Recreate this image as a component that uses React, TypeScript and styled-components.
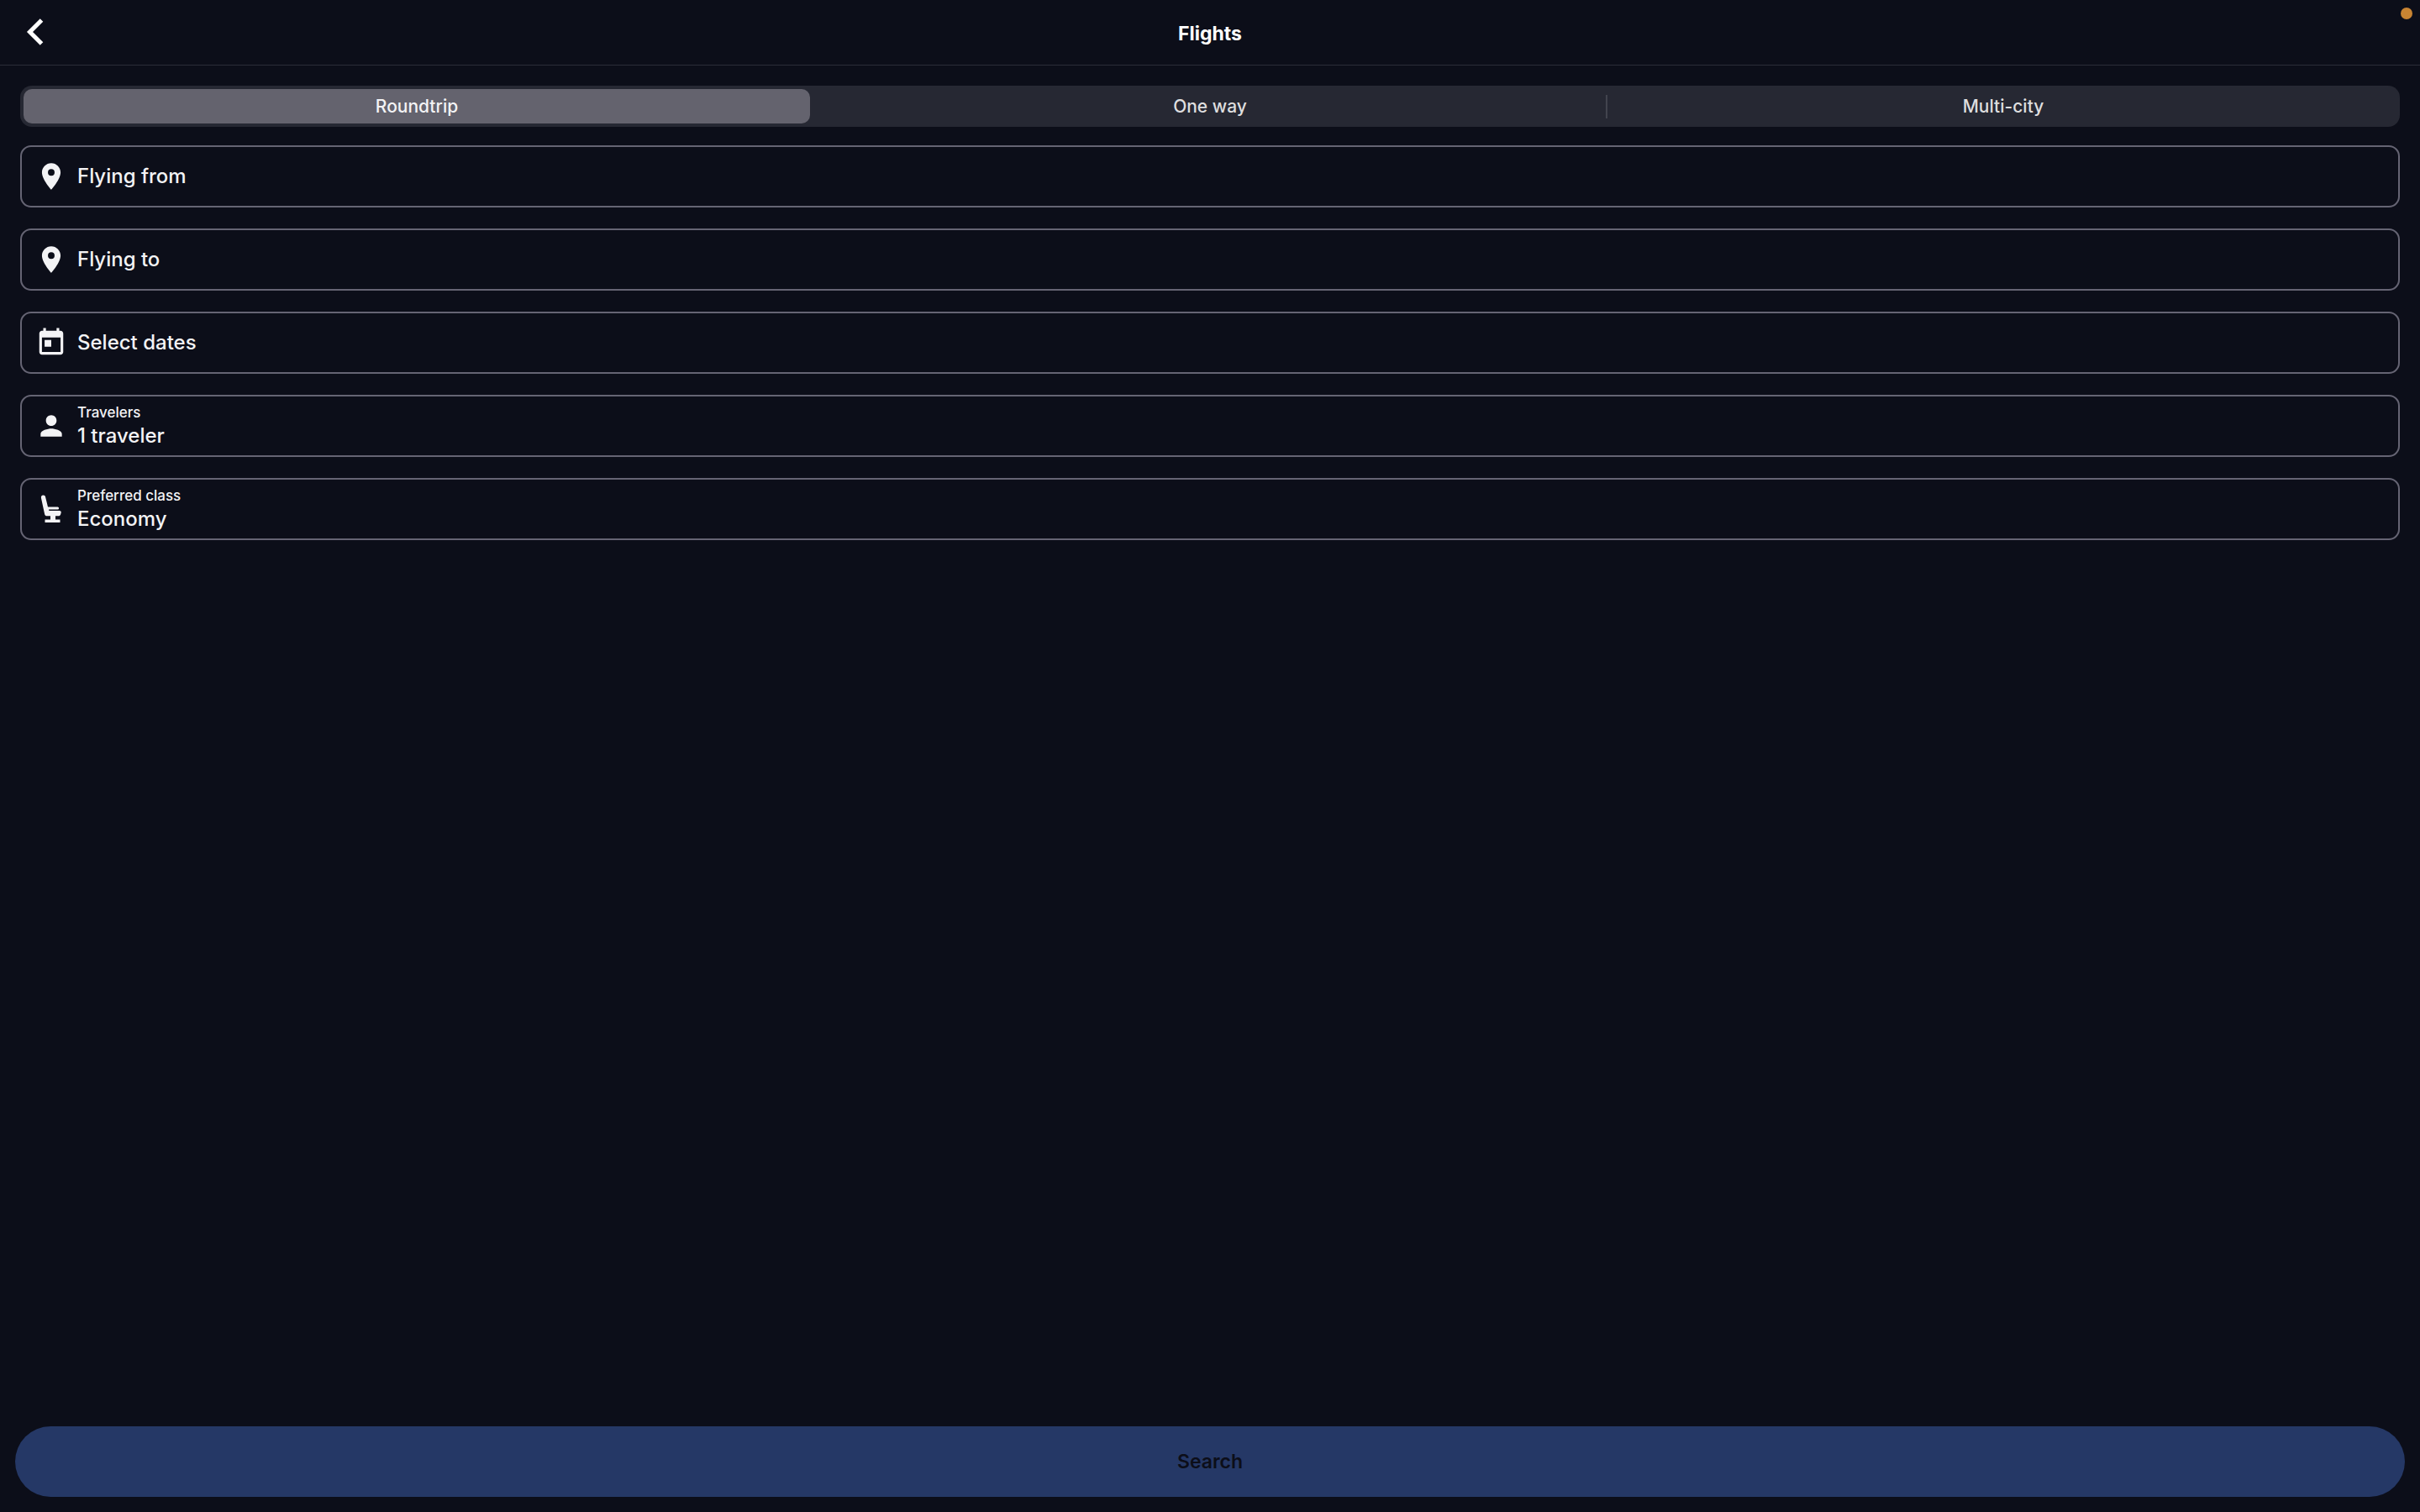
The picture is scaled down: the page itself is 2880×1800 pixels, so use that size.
import React, { useState } from 'react';
import styled, { createGlobalStyle } from 'styled-components';

const color = {
  page: '#0c0e19',
  line: '#2b2d38',
  outline: '#656473',
  track: '#262833',
  thumb: '#64636e',
  separator: '#42444e',
  title: '#ffffff',
  text: '#f3f3f5',
  muted: '#dededf',
  action: '#253866',
  recording: '#c98432',
};

const GlobalStyle = createGlobalStyle`
  *, *::before, *::after {
    box-sizing: border-box;
  }
  body {
    margin: 0;
    background: ${color.page};
    color: ${color.text};
    font-family: Inter, "Liberation Sans", sans-serif;
  }
  button, input {
    font: inherit;
    color: inherit;
  }
`;

const Screen = styled.div`
  position: relative;
  display: flex;
  flex-direction: column;
  min-height: 100vh;
`;

const RecordingDot = styled.span`
  position: absolute;
  top: 9px;
  right: 9px;
  width: 14px;
  height: 14px;
  border-radius: 50%;
  background: ${color.recording};
`;

const Header = styled.header`
  display: grid;
  grid-template-columns: 1fr auto 1fr;
  align-items: center;
  height: 78px;
  padding: 0 24px;
  border-bottom: 1px solid ${color.line};
`;

const BackButton = styled.button`
  justify-self: start;
  display: flex;
  padding: 0 5px;
  border: 0;
  background: none;
  cursor: pointer;
`;

const Title = styled.h1`
  margin: 0;
  padding-top: 2px;
  color: ${color.title};
  font-size: 23px;
  line-height: 32px;
  font-weight: 700;
`;

const Form = styled.form`
  flex: 1;
  display: flex;
  flex-direction: column;
`;

const Body = styled.div`
  flex: 1;
  display: flex;
  flex-direction: column;
  gap: 22px;
  padding: 24px;
`;

const TripTypes = styled.fieldset`
  display: grid;
  grid-template-columns: repeat(3, 1fr);
  margin: 0;
  padding: 0;
  border: 0;
  border-radius: 14px;
  background: ${color.track};
`;

const TripType = styled.label<{ $selected: boolean; $divided: boolean }>`
  display: flex;
  align-items: center;
  padding: 4px;
  cursor: pointer;
  color: ${(p) => (p.$selected ? color.text : color.muted)};

  &::before {
    content: '';
    width: 2px;
    height: 28px;
    margin-left: -5px;
    margin-right: 3px;
    background: ${(p) => (p.$divided ? color.separator : 'transparent')};
  }
`;

const TripRadio = styled.input`
  appearance: none;
  width: 0;
  height: 0;
  margin: 0;
`;

const TripName = styled.span<{ $selected: boolean }>`
  flex: 1;
  border-radius: 10px;
  background: ${(p) => (p.$selected ? color.thumb : 'transparent')};
  text-align: center;
  font-size: 21px;
  line-height: 41px;
  font-weight: 500;
`;

const Fields = styled.div`
  display: flex;
  flex-direction: column;
  gap: 25px;
`;

const Field = styled.button`
  display: flex;
  align-items: center;
  gap: 12px;
  height: 74px;
  padding: 0 16px;
  border: 2px solid ${color.outline};
  border-radius: 13px;
  background: none;
  text-align: left;
  cursor: pointer;
`;

const FieldText = styled.span`
  display: flex;
  flex-direction: column;
`;

const FieldLabel = styled.span`
  font-size: 17px;
  line-height: 24px;
  font-weight: 500;
`;

const FieldValue = styled.span`
  font-size: 24px;
  line-height: 32px;
  font-weight: 500;
`;

const Icon = styled.svg`
  flex: none;
  width: 38px;
  height: 38px;
  fill: ${color.text};
`;

const Footer = styled.footer`
  padding: 18px;
`;

const SearchButton = styled.button`
  display: block;
  width: 100%;
  height: 84px;
  border: 0;
  border-radius: 42px;
  background: ${color.action};
  color: ${color.page};
  font-size: 23px;
  line-height: 32px;
  font-weight: 600;
`;

const ChevronIcon = () => (
  <svg width="24" height="36" viewBox="0 0 24 36" aria-hidden="true">
    <path d="M20.5 3 6.500 17l14 14" fill="none" stroke={color.title} strokeWidth="5" />
  </svg>
);

const PinIcon = () => (
  <Icon viewBox="0 0 24 24" aria-hidden="true">
    <path d="M12 2C8.13 2 5 5.13 5 9c0 5.25 7 13 7 13s7-7.75 7-13c0-3.87-3.13-7-7-7zm0 9.5a2.5 2.5 0 0 1 0-5 2.5 2.5 0 0 1 0 5z" />
  </Icon>
);

const CalendarIcon = () => (
  <Icon viewBox="0 0 24 24" aria-hidden="true">
    <path d="M19 3h-1V1h-2v2H8V1H6v2H5c-1.11 0-1.99.9-1.99 2L3 19c0 1.1.89 2 2 2h14c1.1 0 2-.9 2-2V5c0-1.1-.9-2-2-2zm0 16H5V8h14v11zM7 10h5v5H7z" />
  </Icon>
);

const PersonIcon = () => (
  <Icon viewBox="0 0 24 24" aria-hidden="true">
    <path d="M12 12c2.21 0 4-1.79 4-4s-1.79-4-4-4-4 1.79-4 4 1.79 4 4 4zm0 2c-2.67 0-8 1.34-8 4v2h16v-2c0-2.66-5.33-4-8-4z" />
  </Icon>
);

const SeatIcon = () => (
  <Icon viewBox="0 0 38 38" aria-hidden="true">
    <path d="M9.500 2.500c1.500 0 2.300.9 2.600 2.300L15 16.500h11.600a1.500 1.500 0 0 1 0 3H16l.4 1.500h12.300c1.700 0 2.300 1 2 2.200l-.6 2.200c-.4 1.200-1.300 1.800-2.500 1.800H14c-1.600 0-2.600-.9-2.900-2.300L7 6c-.5-2.100.6-3.500 2.500-3.500z" />
    <path d="M18 26h6v5.500h5.500V35h-18v-3.500H18z" />
  </Icon>
);

const tripTypes = ['Roundtrip', 'One way', 'Multi-city'];

const fields = [
  { value: 'Flying from', icon: PinIcon },
  { value: 'Flying to', icon: PinIcon },
  { value: 'Select dates', icon: CalendarIcon },
  { label: 'Travelers', value: '1 traveler', icon: PersonIcon },
  { label: 'Preferred class', value: 'Economy', icon: SeatIcon },
];

export default function App() {
  const [selected, setSelected] = useState(0);

  return (
    <>
      <GlobalStyle />
      <Screen>
        <RecordingDot />
        <Header>
          <BackButton type="button" aria-label="Back">
            <ChevronIcon />
          </BackButton>
          <Title>Flights</Title>
        </Header>
        <Form onSubmit={(e) => e.preventDefault()}>
          <Body>
            <TripTypes aria-label="Trip type">
              {tripTypes.map((name, i) => (
                <TripType
                  key={name}
                  $selected={i === selected}
                  $divided={i > 0 && i !== selected && i - 1 !== selected}
                >
                  <TripRadio
                    type="radio"
                    name="trip"
                    checked={i === selected}
                    onChange={() => setSelected(i)}
                  />
                  <TripName $selected={i === selected}>{name}</TripName>
                </TripType>
              ))}
            </TripTypes>
            <Fields>
              {fields.map(({ label, value, icon: FieldIcon }) => (
                <Field key={value} type="button">
                  <FieldIcon />
                  <FieldText>
                    {label && <FieldLabel>{label}</FieldLabel>}
                    <FieldValue>{value}</FieldValue>
                  </FieldText>
                </Field>
              ))}
            </Fields>
          </Body>
          <Footer>
            <SearchButton type="submit" disabled>
              Search
            </SearchButton>
          </Footer>
        </Form>
      </Screen>
    </>
  );
}
